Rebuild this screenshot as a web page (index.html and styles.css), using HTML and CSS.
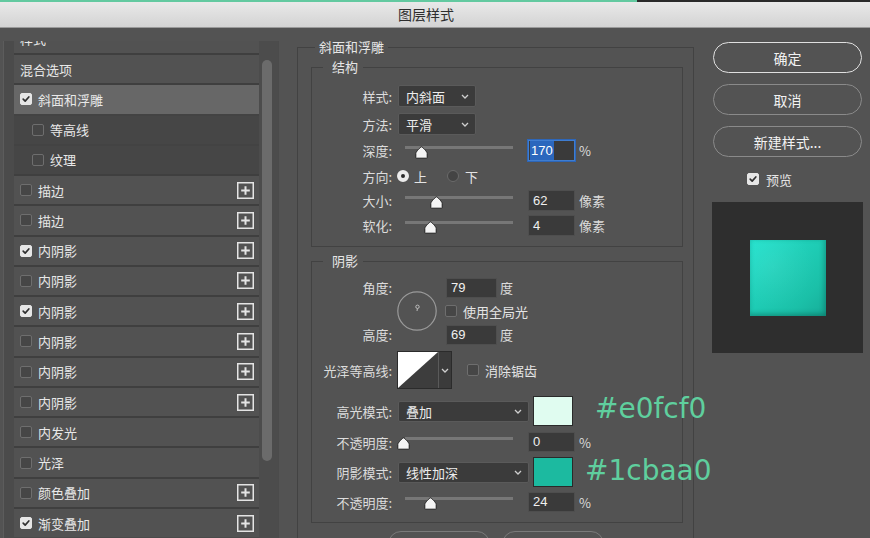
FILE: index.html
```html
<!DOCTYPE html>
<html lang="zh-CN">
<head>
<meta charset="utf-8">
<title>图层样式</title>
<link rel="stylesheet" href="styles.css">
</head>
<body>
<div class="window">
  <div class="topline"></div>
  <div class="titlebar"><span class="title">图层样式</span></div>
  <div class="content">
    <aside class="sidebar">
      <div class="list">
        <div class="list-inner">
          <div class="row plain"><span class="label">样式</span></div>
          <div class="row plain"><span class="label">混合选项</span></div>
          <div class="row active"><span class="cb on"><svg viewBox="0 0 12 12"><path d="M2.6 6.2 5 8.6 9.4 3.6" /></svg></span><span class="label">斜面和浮雕</span></div>
          <div class="row sub"><span class="cb"></span><span class="label">等高线</span></div>
          <div class="row sub"><span class="cb"></span><span class="label">纹理</span></div>
          <div class="row"><span class="cb"></span><span class="label">描边</span><svg class="plus" viewBox="0 0 17 17"><rect x="0.75" y="0.75" width="15.5" height="15.5"/><path d="M8.5 4.2v8.6M4.2 8.5h8.6"/></svg></div>
          <div class="row"><span class="cb"></span><span class="label">描边</span><svg class="plus" viewBox="0 0 17 17"><rect x="0.75" y="0.75" width="15.5" height="15.5"/><path d="M8.5 4.2v8.6M4.2 8.5h8.6"/></svg></div>
          <div class="row"><span class="cb on"><svg viewBox="0 0 12 12"><path d="M2.6 6.2 5 8.6 9.4 3.6" /></svg></span><span class="label">内阴影</span><svg class="plus" viewBox="0 0 17 17"><rect x="0.75" y="0.75" width="15.5" height="15.5"/><path d="M8.5 4.2v8.6M4.2 8.5h8.6"/></svg></div>
          <div class="row"><span class="cb"></span><span class="label">内阴影</span><svg class="plus" viewBox="0 0 17 17"><rect x="0.75" y="0.75" width="15.5" height="15.5"/><path d="M8.5 4.2v8.6M4.2 8.5h8.6"/></svg></div>
          <div class="row"><span class="cb on"><svg viewBox="0 0 12 12"><path d="M2.6 6.2 5 8.6 9.4 3.6" /></svg></span><span class="label">内阴影</span><svg class="plus" viewBox="0 0 17 17"><rect x="0.75" y="0.75" width="15.5" height="15.5"/><path d="M8.5 4.2v8.6M4.2 8.5h8.6"/></svg></div>
          <div class="row"><span class="cb"></span><span class="label">内阴影</span><svg class="plus" viewBox="0 0 17 17"><rect x="0.75" y="0.75" width="15.5" height="15.5"/><path d="M8.5 4.2v8.6M4.2 8.5h8.6"/></svg></div>
          <div class="row"><span class="cb"></span><span class="label">内阴影</span><svg class="plus" viewBox="0 0 17 17"><rect x="0.75" y="0.75" width="15.5" height="15.5"/><path d="M8.5 4.2v8.6M4.2 8.5h8.6"/></svg></div>
          <div class="row"><span class="cb"></span><span class="label">内阴影</span><svg class="plus" viewBox="0 0 17 17"><rect x="0.75" y="0.75" width="15.5" height="15.5"/><path d="M8.5 4.2v8.6M4.2 8.5h8.6"/></svg></div>
          <div class="row"><span class="cb"></span><span class="label">内发光</span></div>
          <div class="row"><span class="cb"></span><span class="label">光泽</span></div>
          <div class="row"><span class="cb"></span><span class="label">颜色叠加</span><svg class="plus" viewBox="0 0 17 17"><rect x="0.75" y="0.75" width="15.5" height="15.5"/><path d="M8.5 4.2v8.6M4.2 8.5h8.6"/></svg></div>
          <div class="row"><span class="cb on"><svg viewBox="0 0 12 12"><path d="M2.6 6.2 5 8.6 9.4 3.6" /></svg></span><span class="label">渐变叠加</span><svg class="plus" viewBox="0 0 17 17"><rect x="0.75" y="0.75" width="15.5" height="15.5"/><path d="M8.5 4.2v8.6M4.2 8.5h8.6"/></svg></div>
        </div>
      </div>
      <div class="scroll"><div class="thumb"></div></div>
    </aside>

    <main class="panel">
      <fieldset class="group outer">
        <legend>斜面和浮雕</legend>

        <fieldset class="group inner structure">
          <legend>结构</legend>
          <div class="frow r-style">
            <span class="lbl">样式:</span>
            <div class="select w78"><span>内斜面</span><svg class="chev" viewBox="0 0 8 5"><path d="M1 1 4 4 7 1"/></svg></div>
          </div>
          <div class="frow r-method">
            <span class="lbl">方法:</span>
            <div class="select w78"><span>平滑</span><svg class="chev" viewBox="0 0 8 5"><path d="M1 1 4 4 7 1"/></svg></div>
          </div>
          <div class="frow r-depth">
            <span class="lbl">深度:</span>
            <div class="slider"><svg class="knob" style="left:9.5px" viewBox="0 0 13 13"><path d="M6.5 0.8 C7.4 0.8 12.2 6 12.2 7.2 V11.6 Q12.2 12.2 11.6 12.2 H1.4 Q0.8 12.2 0.8 11.6 V7.2 C0.8 6 5.6 0.8 6.5 0.8 Z"/></svg></div>
            <div class="num focus"><span class="sel">170</span></div>
            <span class="unit">%</span>
          </div>
          <div class="frow r-dir">
            <span class="lbl">方向:</span>
            <span class="radio on"></span><span class="rtext">上</span>
            <span class="radio off"></span><span class="rtext r2">下</span>
          </div>
          <div class="frow r-size">
            <span class="lbl">大小:</span>
            <div class="slider"><svg class="knob" style="left:24.5px" viewBox="0 0 13 13"><path d="M6.5 0.8 C7.4 0.8 12.2 6 12.2 7.2 V11.6 Q12.2 12.2 11.6 12.2 H1.4 Q0.8 12.2 0.8 11.6 V7.2 C0.8 6 5.6 0.8 6.5 0.8 Z"/></svg></div>
            <div class="num">62</div>
            <span class="unit">像素</span>
          </div>
          <div class="frow r-soft">
            <span class="lbl">软化:</span>
            <div class="slider"><svg class="knob" style="left:18.5px" viewBox="0 0 13 13"><path d="M6.5 0.8 C7.4 0.8 12.2 6 12.2 7.2 V11.6 Q12.2 12.2 11.6 12.2 H1.4 Q0.8 12.2 0.8 11.6 V7.2 C0.8 6 5.6 0.8 6.5 0.8 Z"/></svg></div>
            <div class="num">4</div>
            <span class="unit">像素</span>
          </div>
        </fieldset>

        <fieldset class="group inner shadow">
          <legend>阴影</legend>
          <div class="angle">
            <span class="lbl a-l1">角度:</span>
            <div class="dial"><svg viewBox="0 0 40 40"><circle class="ring" cx="20" cy="20" r="19.2"/><line x1="20" y1="20" x2="20.4" y2="17.6"/><circle class="dot" cx="20.5" cy="15.8" r="1.7"/></svg></div>
            <div class="a-c1"><div class="num small">79</div><span class="unit u2">度</span></div>
            <div class="a-c2"><span class="cb"></span><span class="label">使用全局光</span></div>
            <span class="lbl a-l3">高度:</span>
            <div class="a-c3"><div class="num small">69</div><span class="unit u2">度</span></div>
          </div>
          <div class="frow r-contour">
            <span class="lbl">光泽等高线:</span>
            <div class="contour">
              <svg class="curve" viewBox="0 0 40 38" preserveAspectRatio="none"><rect width="40" height="38" fill="#3d3d3d"/><path d="M0 0 H40 L0 38 Z" fill="#ffffff"/></svg>
              <div class="drop"><svg class="chev" viewBox="0 0 8 5"><path d="M1 1 4 4 7 1"/></svg></div>
            </div>
            <span class="cb aa"></span><span class="label">消除锯齿</span>
          </div>
          <div class="frow r-mode">
            <span class="lbl">高光模式:</span>
            <div class="select w131"><span>叠加</span><svg class="chev" viewBox="0 0 8 5"><path d="M1 1 4 4 7 1"/></svg></div>
            <span class="swatch light"></span>
          </div>
          <div class="frow r-op">
            <span class="lbl">不透明度:</span>
            <div class="slider"><svg class="knob" style="left:-8.5px" viewBox="0 0 13 13"><path d="M6.5 0.8 C7.4 0.8 12.2 6 12.2 7.2 V11.6 Q12.2 12.2 11.6 12.2 H1.4 Q0.8 12.2 0.8 11.6 V7.2 C0.8 6 5.6 0.8 6.5 0.8 Z"/></svg></div>
            <div class="num">0</div>
            <span class="unit">%</span>
          </div>
          <div class="frow r-mode r-mode2">
            <span class="lbl">阴影模式:</span>
            <div class="select w131"><span>线性加深</span><svg class="chev" viewBox="0 0 8 5"><path d="M1 1 4 4 7 1"/></svg></div>
            <span class="swatch teal"></span>
          </div>
          <div class="frow r-op r-op2">
            <span class="lbl">不透明度:</span>
            <div class="slider"><svg class="knob" style="left:18.5px" viewBox="0 0 13 13"><path d="M6.5 0.8 C7.4 0.8 12.2 6 12.2 7.2 V11.6 Q12.2 12.2 11.6 12.2 H1.4 Q0.8 12.2 0.8 11.6 V7.2 C0.8 6 5.6 0.8 6.5 0.8 Z"/></svg></div>
            <div class="num">24</div>
            <span class="unit">%</span>
          </div>
        </fieldset>

        <div class="defaults">
          <span class="dbtn" aria-label="设置为默认值"></span>
          <span class="dbtn" aria-label="复位为默认值"></span>
        </div>
      </fieldset>
    </main>

    <section class="side">
      <div class="btn primary">确定</div>
      <div class="btn">取消</div>
      <div class="btn">新建样式...</div>
      <div class="preview-check"><span class="cb on"><svg viewBox="0 0 12 12"><path d="M2.6 6.2 5 8.6 9.4 3.6" /></svg></span><span class="label">预览</span></div>
      <div class="preview"><div class="sample"></div></div>
    </section>
  </div>

  <span class="hex hex1">#e0fcf0</span>
  <span class="hex hex2">#1cbaa0</span>
</div>
</body>
</html>
```

FILE: styles.css
```css
* { box-sizing: border-box; }
html, body { margin: 0; padding: 0; }
body {
  width: 870px;
  height: 538px;
  overflow: hidden;
  background: #535353;
  font-family: "Noto Sans CJK SC", "Liberation Sans", sans-serif;
  font-size: 13px;
  color: #e4e4e4;
}
.window { position: relative; width: 870px; height: 538px; overflow: hidden; }

.topline {
  height: 2px;
  background: linear-gradient(to right, #63c9a0 0, #63c9a0 637px, #2a2a2a 637px);
}
.titlebar {
  height: 26px;
  background: linear-gradient(#e9e9e9, #d3d3d3);
  border-bottom: 1px solid #9a9a9a;
  font-size: 14px;
  line-height: 25px;
  color: #2e2e2e;
  padding-left: 398px;
}

.content { display: flex; height: 510px; }

/* ---------- left list ---------- */
.sidebar {
  margin: 13px 0 0 3px;
  width: 276px;
  display: flex;
  background: #4b4b4b;
  border-left: 1px solid #5c5c5c;
  padding-left: 10px;
}
.list { width: 245px; overflow: hidden; background: #4a4a4a; }
.list-inner { margin-top: -18.3px; }
.row {
  height: 30.27px;
  border-top: 2px solid #3f3f3f;
  background: #525252;
  display: flex;
  align-items: center;
  padding: 0 5px 0 6px;
  color: #e8e8e8;
}
.row.active { background: #676767; }
.row.sub { background: #464646; padding-left: 18px; border-top-color: #434343; }
.label { white-space: nowrap; }

.cb {
  width: 12px;
  height: 12px;
  flex: none;
  border-radius: 2px;
  border: 1px solid #6e6e6e;
  background: #464646;
  margin-right: 6px;
  display: flex;
  align-items: center;
  justify-content: center;
}
.cb.on { background: #e6e6e6; border-color: #e6e6e6; }
.cb svg { width: 12px; height: 12px; }
.cb svg path { fill: none; stroke: #2f2f2f; stroke-width: 2; stroke-linecap: round; stroke-linejoin: round; }

.plus { margin-left: auto; width: 17px; height: 17px; flex: none; }
.plus rect { fill: none; stroke: #e4e4e4; stroke-width: 1.5; }
.plus path { stroke: #e4e4e4; stroke-width: 2; }

.scroll { width: 19px; background: #4c4c4c; }
.thumb {
  margin: 19px 0 0 3px;
  width: 10px;
  height: 401px;
  border-radius: 5px;
  background: #6b6b6b;
}

/* ---------- middle panel ---------- */
.panel { margin-left: 18px; width: 397px; flex: none; }
fieldset { margin: 0; padding: 0; min-width: 0; border: 1px solid #424242; }
legend { font-size: 13px; line-height: 16px; color: #e6e6e6; }

.outer { margin-top: 11px; padding: 0 10px 0 13px; height: 560px; }
.outer > legend { margin-left: 4px; padding: 0 4px; }
.inner > legend { margin-left: 11px; padding: 0 5px 0 9px; }

.structure { margin-top: 4px; padding: 0 0 10px 0; }
.shadow { margin-top: 6px; padding: 0 0 10px 0; }

.frow { display: flex; align-items: center; }
.lbl { width: 80px; flex: none; text-align: right; color: #dcdcdc; white-space: nowrap; }

.r-style { height: 22px; margin-top: 10px; }
.r-method { height: 22px; margin-top: 6px; }
.r-depth { height: 21px; margin-top: 5px; }
.r-dir { height: 18px; margin-top: 6px; }
.r-size { height: 21px; margin-top: 5px; }
.r-soft { height: 21px; margin-top: 4px; }

.select {
  margin-left: 6px;
  height: 22px;
  background: #3b3b3b;
  border: 1px solid #5a5a5a;
  border-radius: 2px;
  display: flex;
  align-items: center;
  justify-content: space-between;
  padding: 0 6px 0 7px;
  color: #ececec;
}
.w78 { width: 78px; }
.w131 { width: 131px; }
.chev { width: 8px; height: 5px; }
.chev path { fill: none; stroke: #cfcfcf; stroke-width: 1.3; }

.slider {
  position: relative;
  width: 108px;
  height: 14px;
  margin: 4px 0 0 13px;
  border-top: 3px solid #777777;
  flex: none;
}
.knob { position: absolute; top: -3px; width: 13px; height: 13px; }
.knob path { fill: #f4f4f4; stroke: #1e1e1e; stroke-width: 1; }

.num {
  width: 47px;
  height: 21px;
  margin-left: 15px;
  background: #3a3a3a;
  border: 1px solid #4e4e4e;
  color: #f0f0f0;
  padding-left: 4px;
  font-family: "Liberation Sans", "Noto Sans CJK SC", sans-serif;
  font-size: 13px;
  line-height: 19px;
  flex: none;
}
.num.focus { border: 1px solid #3f7dd0; box-shadow: 0 0 0 1px #2d66b8; padding-left: 1px; }
.num .sel { background: #2b67bd; color: #fff; padding: 0 1px; display: inline-block; line-height: 19px; }
.unit { margin-left: 4px; color: #dcdcdc; }

.radio { width: 12px; height: 12px; border-radius: 50%; flex: none; }
.radio.on { margin-left: 5px; border: 4px solid #ececec; background: #2a2a2a; }
.radio.off { margin-left: 20px; background: #444; border: 1px solid #6a6a6a; }
.rtext { margin-left: 5px; }
.rtext.r2 { margin-left: 6px; }

/* angle block */
.angle {
  display: grid;
  grid-template-columns: 80px 49px 1fr;
  grid-template-rows: 19px 28px 19px;
  margin-top: 9px;
  align-items: center;
}
.a-l1 { grid-column: 1; grid-row: 1; }
.a-l3 { grid-column: 1; grid-row: 3; }
.dial { grid-column: 2; grid-row: 1 / 4; margin-left: 5px; width: 40px; height: 40px; }
.dial svg { width: 40px; height: 40px; display: block; }
.dial .ring { fill: none; stroke: #9a9a9a; stroke-width: 1.2; }
.dial line { stroke: #bdbdbd; stroke-width: 1; }
.dial .dot { fill: none; stroke: #bdbdbd; stroke-width: 1; }
.a-c1, .a-c2, .a-c3 { grid-column: 3; display: flex; align-items: center; }
.a-c1 { grid-row: 1; }
.a-c2 { grid-row: 2; padding-left: 4px; }
.a-c3 { grid-row: 3; }
.num.small { width: 51px; height: 20px; margin-left: 5px; line-height: 18px; }
.unit.u2 { margin-left: 3px; }

.r-contour { height: 38px; margin-top: 7px; }
.contour { margin-left: 5px; display: flex; border: 1px solid #2b2b2b; height: 38px; }
.curve { width: 40px; height: 36px; display: block; }
.drop { width: 13px; background: #3b3b3b; border-left: 1px solid #5a5a5a; display: flex; align-items: center; justify-content: center; }
.cb.aa { margin-left: 15px; }

.r-mode { height: 30px; margin-top: 7px; }
.r-mode .select { height: 21px; }
.r-mode2 { margin-top: 5px; }
.swatch { width: 40px; height: 30px; margin-left: 4px; border: 1px solid #2a2a2a; flex: none; }
.swatch.light { background: #e0fcf0; }
.swatch.teal { background: #1cbaa0; }

.r-op { height: 20px; margin-top: 6px; }
.r-op .num { height: 20px; line-height: 18px; }
.r-op2 { margin-top: 5px; }

.defaults { display: flex; gap: 12px; margin: 8px 0 0 77px; }
.dbtn {
  width: 102px;
  height: 26px;
  border: 1px solid #7a7a7a;
  border-radius: 13px;
}

/* ---------- right column ---------- */
.side { margin-left: 18px; width: 151px; flex: none; padding-top: 14px; display: flex; flex-direction: column; }
.btn {
  height: 31px;
  margin: 0 1px 11px;
  border: 1px solid #8a8a8a;
  border-radius: 16px;
  display: flex;
  align-items: center;
  justify-content: center;
  font-size: 14px;
  color: #f2f2f2;
}
.btn.primary { border: 1.5px solid #e0e0e0; }
.preview-check { height: 16px; margin-top: 3px; padding-left: 35px; display: flex; align-items: center; }
.preview-check .cb { margin-right: 7px; }
.preview {
  margin-top: 15px;
  width: 151px;
  height: 151px;
  background: #2e2e2e;
  display: flex;
  align-items: center;
  justify-content: center;
}
.sample {
  width: 76px;
  height: 76px;
  background:
    radial-gradient(circle at 30% 35%, rgba(255,255,255,0.06), rgba(255,255,255,0) 60%),
    linear-gradient(135deg, #25e3cf 0%, #1fcfb8 40%, #1bc0a8 75%, #16ad98 100%);
  box-shadow: inset 0 -3px 4px rgba(0,60,50,0.25), inset -3px 0 4px rgba(0,60,50,0.15);
}

/* ---------- annotations ---------- */
.hex {
  position: absolute;
  font-family: "DejaVu Sans", sans-serif;
  font-size: 28px;
  line-height: 1;
  color: #5fcf9e;
  white-space: nowrap;
}
.hex1 { left: 595px; top: 395px; }
.hex2 { left: 585px; top: 457px; }
```
